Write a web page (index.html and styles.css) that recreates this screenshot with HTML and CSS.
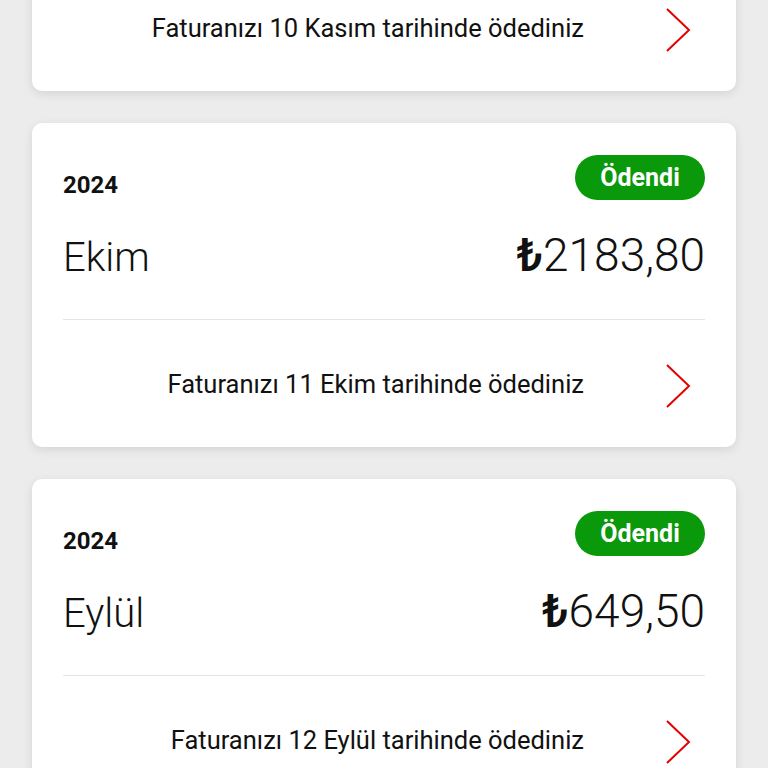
FILE: index.html
```html
<!DOCTYPE html>
<html lang="tr">
<head>
<meta charset="utf-8">
<link rel="stylesheet" href="styles.css">
</head>
<body>
<div class="list">
  <div class="card card-partial">
    <div class="footer">
      <span class="footer-text">Faturanızı 10 Kasım tarihinde ödediniz</span>
      <svg class="chev" width="26" height="44" viewBox="0 0 26 44"><polyline points="2,1 24,22 2,43" fill="none" stroke="#e60000" stroke-width="2"/></svg>
    </div>
  </div>

  <div class="card">
    <div class="top">
      <div class="head">
        <span class="year">2024</span>
        <span class="badge">Ödendi</span>
      </div>
      <div class="main">
        <span class="month">Ekim</span>
        <span class="amount"><span class="lira">₺</span>2183,80</span>
      </div>
    </div>
    <div class="footer">
      <span class="footer-text">Faturanızı 11 Ekim tarihinde ödediniz</span>
      <svg class="chev" width="26" height="44" viewBox="0 0 26 44"><polyline points="2,1 24,22 2,43" fill="none" stroke="#e60000" stroke-width="2"/></svg>
    </div>
  </div>

  <div class="card">
    <div class="top">
      <div class="head">
        <span class="year">2024</span>
        <span class="badge">Ödendi</span>
      </div>
      <div class="main">
        <span class="month">Eylül</span>
        <span class="amount"><span class="lira">₺</span>649,50</span>
      </div>
    </div>
    <div class="footer">
      <span class="footer-text">Faturanızı 12 Eylül tarihinde ödediniz</span>
      <svg class="chev" width="26" height="44" viewBox="0 0 26 44"><polyline points="2,1 24,22 2,43" fill="none" stroke="#e60000" stroke-width="2"/></svg>
    </div>
  </div>
</div>
</body>
</html>
```
FILE: styles.css
```css
html, body {
  margin: 0;
  padding: 0;
  background: #ececec;
  font-family: Roboto, "Noto Sans", sans-serif;
  color: #111;
  overflow: hidden;
}

.list {
  display: flex;
  flex-direction: column;
  gap: 32px;
  padding: 0 32px;
}

.card {
  background: #fff;
  border-radius: 10px;
  box-shadow: 0 3px 10px rgba(0, 0, 0, 0.10);
}

.card-partial {
  margin-top: -36px;
}

.top {
  padding: 32px 31px 0 31px;
}

.head {
  display: flex;
  justify-content: space-between;
  align-items: flex-end;
  height: 45px;
}

.year {
  font-size: 24px;
  font-weight: 700;
  line-height: 24px;
  margin-bottom: 3px;
}

.badge {
  display: flex;
  align-items: center;
  justify-content: center;
  width: 130px;
  height: 45px;
  border-radius: 23px;
  background: #0a990a;
  color: #fff;
  font-size: 25px;
  font-weight: 700;
}

.main {
  display: flex;
  justify-content: space-between;
  align-items: baseline;
  margin-top: 27px;
  height: 56px;
  line-height: 56px;
  padding-bottom: 36px;
}

.month {
  font-size: 40px;
  font-weight: 300;
}

.amount {
  font-size: 46px;
  font-weight: 300;
}

.lira {
  font-weight: 500;
}

.footer {
  margin: 0 31px;
  border-top: 1px solid #e4e4e4;
  height: 127px;
  display: flex;
  align-items: center;
  justify-content: flex-end;
  gap: 81px;
  padding-right: 14px;
}

.card-partial .footer {
  border-top: none;
}

.footer-text {
  font-size: 25.5px;
  font-weight: 400;
}

.chev {
  display: block;
  margin-top: 4px;
}
```
